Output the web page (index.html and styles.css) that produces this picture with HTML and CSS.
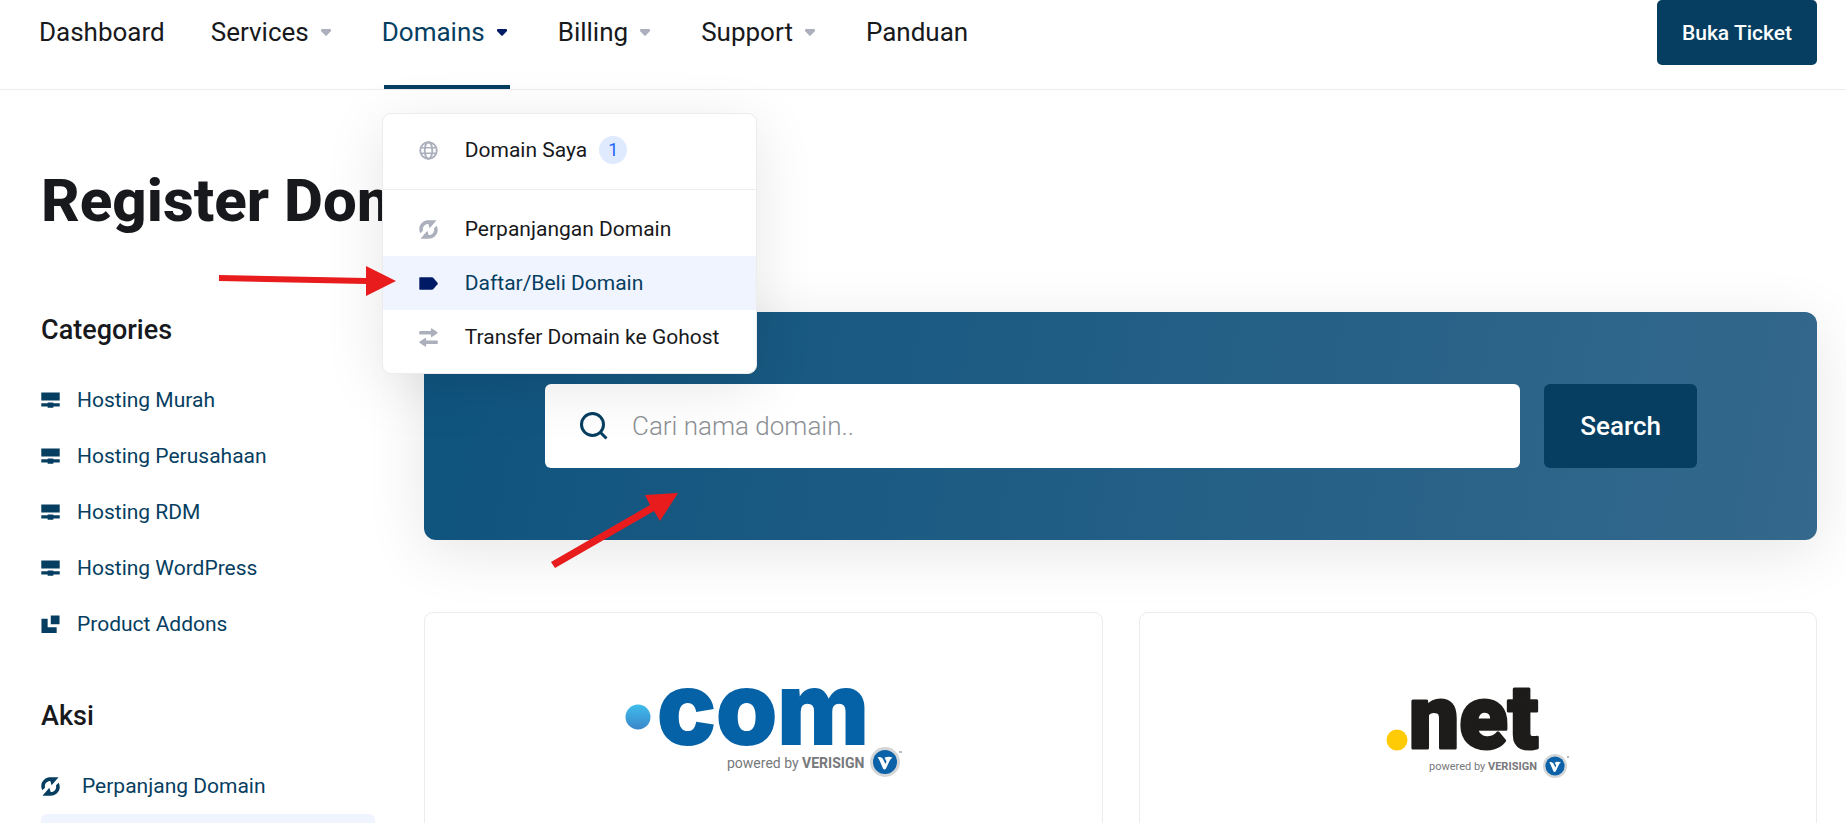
FILE: index.html
```
<!DOCTYPE html>
<html lang="id">
  <head>
    <meta charset="UTF-8" />
    <meta name="viewport" content="width=device-width, initial-scale=1.0" />
    <title>Register Domain</title>
    <link rel="stylesheet" href="styles.css" />
  </head>
  <body>
    <!-- shared icons -->
    <svg class="sprite" aria-hidden="true">
      <symbol id="caret" viewBox="0 0 10 7">
        <path d="M1 0H9Q10 0 10 1V2L5.700 6.500Q5 7 4.300 6.500L0 2V1Q0 0 1 0Z" />
      </symbol>
      <symbol id="globe" viewBox="0 0 20 20">
        <g fill="none" stroke="currentColor" stroke-width="2">
          <circle cx="10" cy="10" r="8.700" />
          <ellipse cx="10" cy="10" rx="4" ry="8.700" />
          <path d="M1.500 7H18.500M1.500 13H18.500" stroke-width="1.600" />
        </g>
      </symbol>
      <symbol id="renew" viewBox="0 0 20 20">
        <path d="M1.400 14C-.8 9.500 .3 5 3.800 2.300 5.500 1 7.500.3 10 .3H18.500L11.200 8.800 9.800 4.200C6 4.300 3.500 7 4.200 11.200Z" />
        <path d="M18.600 6C20.800 10.500 19.700 15 16.200 17.700 14.500 19 12.500 19.700 10 19.700H1.500L8.800 11.200 10.200 15.800C14 15.700 16.500 13 15.800 8.800Z" />
      </symbol>
      <symbol id="tag" viewBox="0 0 20 20">
        <path d="M1 3.500H13.500Q14.500 3.500 15.200 4.200L19.500 9.300Q20 10 19.500 10.700L15.200 15.800Q14.500 16.500 13.500 16.500H1Q.3 16.500.3 15.800V4.200Q.3 3.500 1 3.500Z" />
      </symbol>
      <symbol id="transfer" viewBox="0 0 20 20">
        <path d="M1 3.200H12.500V1.500Q12.500 -.2 14 .7L19.200 4.300Q20 5 19.200 5.700L14 9.300Q12.500 10.200 12.500 8.500V6.800H1Q.2 6.800.2 6V4Q.2 3.200 1 3.200Z" />
        <path d="M19 13.200H7.500V11.500Q7.500 9.800 6 10.700L.8 14.300Q0 15 .8 15.700L6 19.300Q7.500 20.200 7.500 18.500V16.800H19Q19.800 16.800 19.800 16V14Q19.800 13.200 19 13.200Z" />
      </symbol>
      <symbol id="server" viewBox="0 0 20 20">
        <path d="M.3 1.500H19.700V10H.3ZM.3 13H7V12H13V13H19.700V16.300H13V17.500H7V16.300H.3Z" />
      </symbol>
      <symbol id="addons" viewBox="0 0 20 20">
        <path d="M10.300.5H19.500V9.700H10.300ZM.5 4H7V13H16.500V19H.5Z" />
      </symbol>
      <symbol id="verisign" viewBox="0 0 30 30">
        <circle cx="15" cy="15" r="15" fill="#d3d5d7" />
        <circle cx="15" cy="15" r="12" fill="#0b62a8" />
        <path fill="#fff" d="M7.500 10.500Q11 9.200 13 12L15.500 17 16.500 14.500 14.500 10.800Q18 9 22.500 10.500 20.500 11.500 19.500 14L16 21.500Q14.500 23.500 13 21.500L9.800 14Q9 11.500 7.500 10.500Z" />
      </symbol>
    </svg>

    <header class="header">
      <nav class="nav">
        <a class="nav-link" href="#">Dashboard</a>
        <a class="nav-link" href="#">Services <svg class="caret"><use href="#caret" /></svg></a>
        <div class="nav-item">
          <a class="nav-link active" href="#">Domains <svg class="caret"><use href="#caret" /></svg></a>
          <div class="dropdown">
            <a class="dropdown-item" href="#">
              <svg class="icon"><use href="#globe" /></svg>Domain Saya<span class="badge">1</span>
            </a>
            <hr class="divider" />
            <a class="dropdown-item" href="#"><svg class="icon"><use href="#renew" /></svg>Perpanjangan Domain</a>
            <a class="dropdown-item selected" href="#"><svg class="icon"><use href="#tag" /></svg>Daftar/Beli Domain</a>
            <a class="dropdown-item" href="#"><svg class="icon"><use href="#transfer" /></svg>Transfer Domain ke Gohost</a>
          </div>
        </div>
        <a class="nav-link" href="#">Billing <svg class="caret"><use href="#caret" /></svg></a>
        <a class="nav-link" href="#">Support <svg class="caret"><use href="#caret" /></svg></a>
        <a class="nav-link" href="#">Panduan</a>
      </nav>
      <button class="ticket-btn" type="button">Buka Ticket</button>
    </header>

    <main class="page">
      <h1>Register Domain</h1>
      <div class="columns">
        <aside class="sidebar">
          <h2>Categories</h2>
          <ul class="side-list">
            <li><a href="#"><svg class="icon"><use href="#server" /></svg>Hosting Murah</a></li>
            <li><a href="#"><svg class="icon"><use href="#server" /></svg>Hosting Perusahaan</a></li>
            <li><a href="#"><svg class="icon"><use href="#server" /></svg>Hosting RDM</a></li>
            <li><a href="#"><svg class="icon"><use href="#server" /></svg>Hosting WordPress</a></li>
            <li><a href="#"><svg class="icon"><use href="#addons" /></svg>Product Addons</a></li>
          </ul>
          <h2>Aksi</h2>
          <ul class="side-list actions">
            <li><a href="#"><svg class="icon"><use href="#renew" /></svg>Perpanjang Domain</a></li>
            <li class="current"></li>
          </ul>
        </aside>

        <section class="content">
          <form class="search-panel">
            <label class="search-box">
              <svg class="search-icon" viewBox="0 0 28 28">
                <circle cx="12.500" cy="12.500" r="11" />
                <path d="M20.500 20.500L26.500 26.500" />
              </svg>
              <input type="text" placeholder="Cari nama domain.." aria-label="Cari nama domain" />
            </label>
            <button class="search-btn" type="button">Search</button>
          </form>

          <div class="cards">
            <article class="card">
              <svg class="tld-logo" width="277" height="94" viewBox="0 0 277 94">
                <defs>
                  <linearGradient id="dot" x1="0" y1="0" x2="0" y2="1">
                    <stop offset="0" stop-color="#3fbdec" />
                    <stop offset="1" stop-color="#3a86c8" />
                  </linearGradient>
                </defs>
                <circle cx="13" cy="31" r="12.500" fill="url(#dot)" />
                <text class="tld-com" x="32" y="58">com</text>
                <text class="powered" x="102" y="82">powered by <tspan class="brand">VERISIGN</tspan></text>
                <use href="#verisign" x="245" y="61" width="30" height="30" />
                <path d="M274 66H277" stroke="#77787b" />
              </svg>
            </article>
            <article class="card">
              <svg class="tld-logo" width="183" height="94" viewBox="0 0 183 94">
                <circle cx="11" cy="54" r="10.500" fill="#ffcb05" />
                <text class="tld-net" x="23" y="62">net</text>
                <text class="powered small" x="43" y="84">powered by <tspan class="brand">VERISIGN</tspan></text>
                <use href="#verisign" x="157" y="68" width="24" height="24" />
                <path d="M181 71H183" stroke="#77787b" />
              </svg>
            </article>
          </div>
        </section>
      </div>
    </main>

    <!-- arrows pointing at the menu entry and the search box -->
    <svg class="arrows" aria-hidden="true">
      <path d="M219 275L366 278V266L396 281 366 296V284L219 281Z" />
      <path d="M551 562L650 505 645 495 678 493 660 521 654 511 555 568Z" />
    </svg>
  </body>
</html>
```
FILE: styles.css
```
* {
  box-sizing: border-box;
}
body {
  position: relative;
  margin: 0;
  height: 100vh;
  overflow: hidden;
  font-family: Roboto, sans-serif;
  font-size: 21px;
  color: #18191c;
  background-color: #fff;
}
a {
  color: inherit;
  text-decoration: none;
}
button,
input {
  font-family: inherit;
  border: none;
}
.sprite {
  display: none;
}
.icon {
  width: 19px;
  height: 19px;
  flex-shrink: 0;
  fill: currentColor;
}

/* header */
.header {
  display: flex;
  justify-content: space-between;
  align-items: flex-start;
  padding: 0 29px 0 39px;
  border-bottom: 1px solid #ececec;
}
.nav {
  display: flex;
  gap: 46px;
  font-size: 26px;
}
.nav-item {
  position: relative;
}
.nav-link {
  display: flex;
  align-items: center;
  height: 89px;
  padding-bottom: 25px;
}
.nav-link.active {
  color: #063e61;
  background: linear-gradient(#063e61, #063e61) center bottom / calc(100% - 4px) 4px no-repeat;
}
.caret {
  width: 10px;
  height: 7px;
  margin: 0 5px 0 12px;
  fill: #acb0bd;
}
.nav-link.active .caret {
  fill: #001a66;
}
.ticket-btn {
  height: 65px;
  padding: 0 25px;
  border-radius: 5px;
  font-size: 21px;
  font-weight: 500;
  color: #fff;
  background-color: #063e61;
  cursor: pointer;
}

/* domains menu */
.dropdown {
  position: absolute;
  top: 113px;
  left: 0;
  z-index: 2;
  width: max-content;
  padding: 9px 0;
  border: 1px solid #ececec;
  border-radius: 9px;
  background-color: #fff;
  box-shadow: 0 12px 60px rgba(0, 0, 0, 0.1);
  font-size: 21px;
}
.dropdown-item {
  display: flex;
  align-items: center;
  height: 54px;
  padding: 0 37px 0 36px;
}
.dropdown-item .icon {
  margin-right: 27px;
  color: #acb0bd;
}
.dropdown-item.selected {
  color: #063e61;
  background-color: #f0f4ff;
}
.dropdown-item.selected .icon {
  color: #001a66;
}
.badge {
  width: 28px;
  height: 28px;
  margin-left: 12px;
  border-radius: 14px;
  font-size: 18px;
  line-height: 28px;
  text-align: center;
  color: #1f64ff;
  background-color: #e0eaff;
}
.divider {
  margin: 12px 0;
  border: none;
  border-top: 1px solid #ececec;
}

/* page */
.page {
  padding: 75px 29px 0 41px;
}
h1 {
  margin: 0 0 75px;
  font-size: 60px;
  line-height: 72px;
  font-weight: 800;
}
.columns {
  display: flex;
  gap: 49px;
}
.sidebar {
  width: 334px;
  flex-shrink: 0;
}
h2 {
  margin: 0 0 24px;
  font-size: 27px;
  line-height: 36px;
  font-weight: 500;
}
.side-list {
  margin: 0 0 46px;
  padding: 0;
  list-style: none;
  color: #063e61;
}
.side-list a {
  display: flex;
  align-items: center;
  gap: 17px;
  height: 56px;
}
.actions a {
  gap: 22px;
}
.current {
  height: 54px;
  border-radius: 6px;
  background-color: #f0f4ff;
}
.content {
  flex: 1;
}
.search-panel {
  display: flex;
  gap: 24px;
  padding: 72px 120px 72px 121px;
  border-radius: 12px;
  background: linear-gradient(100deg, #0f547e, #34688c);
  box-shadow: 0 12px 60px rgba(0, 0, 0, 0.1);
}
.search-box {
  flex: 1;
  display: flex;
  align-items: center;
  gap: 24px;
  height: 84px;
  padding: 0 35px;
  border-radius: 6px;
  background-color: #fff;
}
.search-icon {
  width: 28px;
  height: 28px;
  fill: none;
  stroke: #063e61;
  stroke-width: 3;
}
.search-box input {
  flex: 1;
  padding: 0;
  outline: none;
  font-size: 26px;
  font-weight: 300;
  background: none;
}
.search-box input::placeholder {
  color: #8d9095;
}
.search-btn {
  padding: 0 36px;
  border-radius: 6px;
  font-size: 26px;
  font-weight: 500;
  color: #fff;
  background-color: #063e61;
  cursor: pointer;
}
.cards {
  display: grid;
  grid-template-columns: 1fr 1fr;
  gap: 36px;
  margin-top: 72px;
}
.card {
  display: flex;
  justify-content: center;
  padding: 73px 36px;
  border: 1px solid #ececec;
  border-radius: 9px;
  background-color: #fff;
}

/* domain logos */
.tld-logo {
  overflow: visible;
}
.tld-com {
  font-family: Inter, sans-serif;
  font-size: 99px;
  font-weight: 800;
  fill: #0562a6;
  stroke: #0562a6;
  stroke-width: 2;
}
.tld-net {
  font-size: 89px;
  font-weight: 900;
  fill: #1d1c1a;
  stroke: #1d1c1a;
  stroke-width: 3;
  stroke-linejoin: round;
}
.powered {
  font-size: 14px;
  fill: #77787b;
}
.powered.small {
  font-size: 11px;
}
.brand {
  font-weight: 700;
}

.arrows {
  position: absolute;
  top: 0;
  left: 0;
  z-index: 3;
  width: 100%;
  height: 100%;
  fill: #e81c1c;
  pointer-events: none;
}
```
